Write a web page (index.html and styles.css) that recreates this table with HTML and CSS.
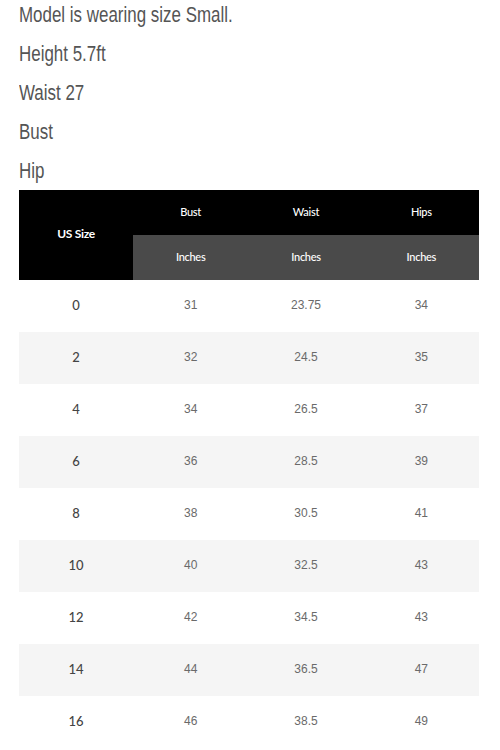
FILE: index.html
```html
<!DOCTYPE html>
<html>
<head>
<meta charset="utf-8">
<link rel="stylesheet" href="styles.css">
</head>
<body>
<div class="page">
  <div class="model-info">
    <p>Model is wearing size Small.</p>
    <p>Height 5.7ft</p>
    <p>Waist 27</p>
    <p>Bust</p>
    <p>Hip</p>
  </div>
  <table class="size-table">
    <thead>
      <tr class="head-top">
        <th class="size-head" rowspan="2">US Size</th>
        <th>Bust</th>
        <th>Waist</th>
        <th>Hips</th>
      </tr>
      <tr class="head-sub">
        <th>Inches</th>
        <th>Inches</th>
        <th>Inches</th>
      </tr>
    </thead>
    <tbody>
      <tr><td class="size">0</td><td>31</td><td>23.75</td><td>34</td></tr>
      <tr><td class="size">2</td><td>32</td><td>24.5</td><td>35</td></tr>
      <tr><td class="size">4</td><td>34</td><td>26.5</td><td>37</td></tr>
      <tr><td class="size">6</td><td>36</td><td>28.5</td><td>39</td></tr>
      <tr><td class="size">8</td><td>38</td><td>30.5</td><td>41</td></tr>
      <tr><td class="size">10</td><td>40</td><td>32.5</td><td>43</td></tr>
      <tr><td class="size">12</td><td>42</td><td>34.5</td><td>43</td></tr>
      <tr><td class="size">14</td><td>44</td><td>36.5</td><td>47</td></tr>
      <tr><td class="size">16</td><td>46</td><td>38.5</td><td>49</td></tr>
    </tbody>
  </table>
</div>
</body>
</html>
```

FILE: styles.css
```css
html, body {
  margin: 0;
  padding: 0;
  background: #ffffff;
}

.page {
  padding: 0 21px 0 19px;
}

.model-info {
  font-family: "Liberation Sans", Arial, sans-serif;
  font-size: 22px;
  color: #555555;
  padding-top: 2px;
  transform: scaleX(0.77);
  transform-origin: left top;
}

.model-info p {
  margin: 0;
  height: 39px;
  line-height: 26px;
  white-space: nowrap;
}

.size-table {
  width: 460px;
  border-collapse: collapse;
  table-layout: fixed;
  margin-top: -7px;
}

.size-table th {
  font-family: "Lato", "Liberation Sans", sans-serif;
  font-size: 11px;
  font-weight: 500;
  color: #ffffff;
  letter-spacing: -0.3px;
  height: 42px;
  padding: 0 0 3px;
  text-align: center;
}

.size-table .head-top th {
  background: #000000;
}

.size-table .head-top .size-head {
  width: 114px;
  font-weight: 700;
  font-size: 12px;
}

.size-table .head-sub th {
  background: #4a4a4a;
}

.size-table td {
  height: 49px;
  padding: 0 0 3px;
  text-align: center;
  font-family: "Liberation Sans", sans-serif;
  font-size: 12px;
  color: #6a6a6a;
}

.size-table td.size {
  color: #444444;
  font-family: "Lato", "Liberation Sans", sans-serif;
  font-weight: 500;
  font-size: 13px;
}

.size-table tbody tr:nth-child(even) td {
  background: #f5f5f5;
}
```
